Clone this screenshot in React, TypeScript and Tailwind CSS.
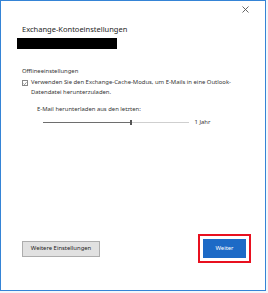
export default function App() {
  return (
    <div className="h-[293px] w-[268px] bg-[#f3f6fa]" style={{ fontFamily: '"Noto Sans", "Open Sans", sans-serif' }}>
      <div className="flex h-[291px] w-[266px] flex-col border border-[#3584d6] bg-white pl-[21px] pr-[14px] text-[#262626]">
        <div className="flex h-[20px] items-start justify-end pr-[2px] pt-[5px]">
          <svg width="7" height="7" viewBox="0 0 7 7" className="text-[#555]">
            <path d="M0.5 0.5 L6.5 6.5 M6.5 0.5 L0.5 6.5" stroke="currentColor" strokeWidth="0.9" />
          </svg>
        </div>
        <h1 className="mt-[3px] text-[7.5px] leading-[11px] text-[#1e1e1e]">Exchange-Kontoeinstellungen</h1>
        <div className="-ml-[5px] mt-[3px] h-[11px] w-[100px] bg-black" />
        <p className="mt-[18px] text-[5.9px] leading-[9px] text-[#333]">Offlineeinstellungen</p>
        <div className="mt-[2px] flex gap-[3px]">
          <span className="mt-[2px] flex h-[6px] w-[6px] shrink-0 items-center justify-center border border-[#888] bg-white">
            <svg width="5" height="5" viewBox="0 0 5 5">
              <path d="M0.6 2.6 L1.9 3.9 L4.4 1" fill="none" stroke="#444" strokeWidth="0.7" />
            </svg>
          </span>
          <p className="text-[5.9px] leading-[9.5px] text-[#333]">
            Verwenden Sie den Exchange-Cache-Modus, um E-Mails in eine Outlook-
            <br />
            Datendatei herunterzuladen.
          </p>
        </div>
        <p className="ml-[15px] mt-[8px] text-[5.9px] leading-[9px] text-[#333]">E-Mail herunterladen aus den letzten:</p>
        <div className="ml-[21px] mt-[4px] flex items-center">
          <div className="h-[1px] w-[87px] bg-[#6e6e6e]" />
          <div className="h-[5px] w-[1.5px] bg-[#555]" />
          <div className="h-[1px] w-[57px] bg-[#cfcfcf]" />
          <span className="ml-[6px] text-[5.9px] leading-[9px] text-[#333]">1 Jahr</span>
        </div>
        <div className="flex-1" />
        <div className="mb-[27px] flex items-center justify-between">
          <button className="h-[16px] w-[78px] border border-[#adadad] bg-[#e1e1e1] text-[5.9px] text-[#222]">
            Weitere Einstellungen
          </button>
          <div className="border-[2px] border-[#e8101f] p-[3px]">
            <button className="block h-[19px] w-[43px] bg-[#1d6ac6] text-[5.9px] text-white">Weiter</button>
          </div>
        </div>
      </div>
    </div>
  )
}
